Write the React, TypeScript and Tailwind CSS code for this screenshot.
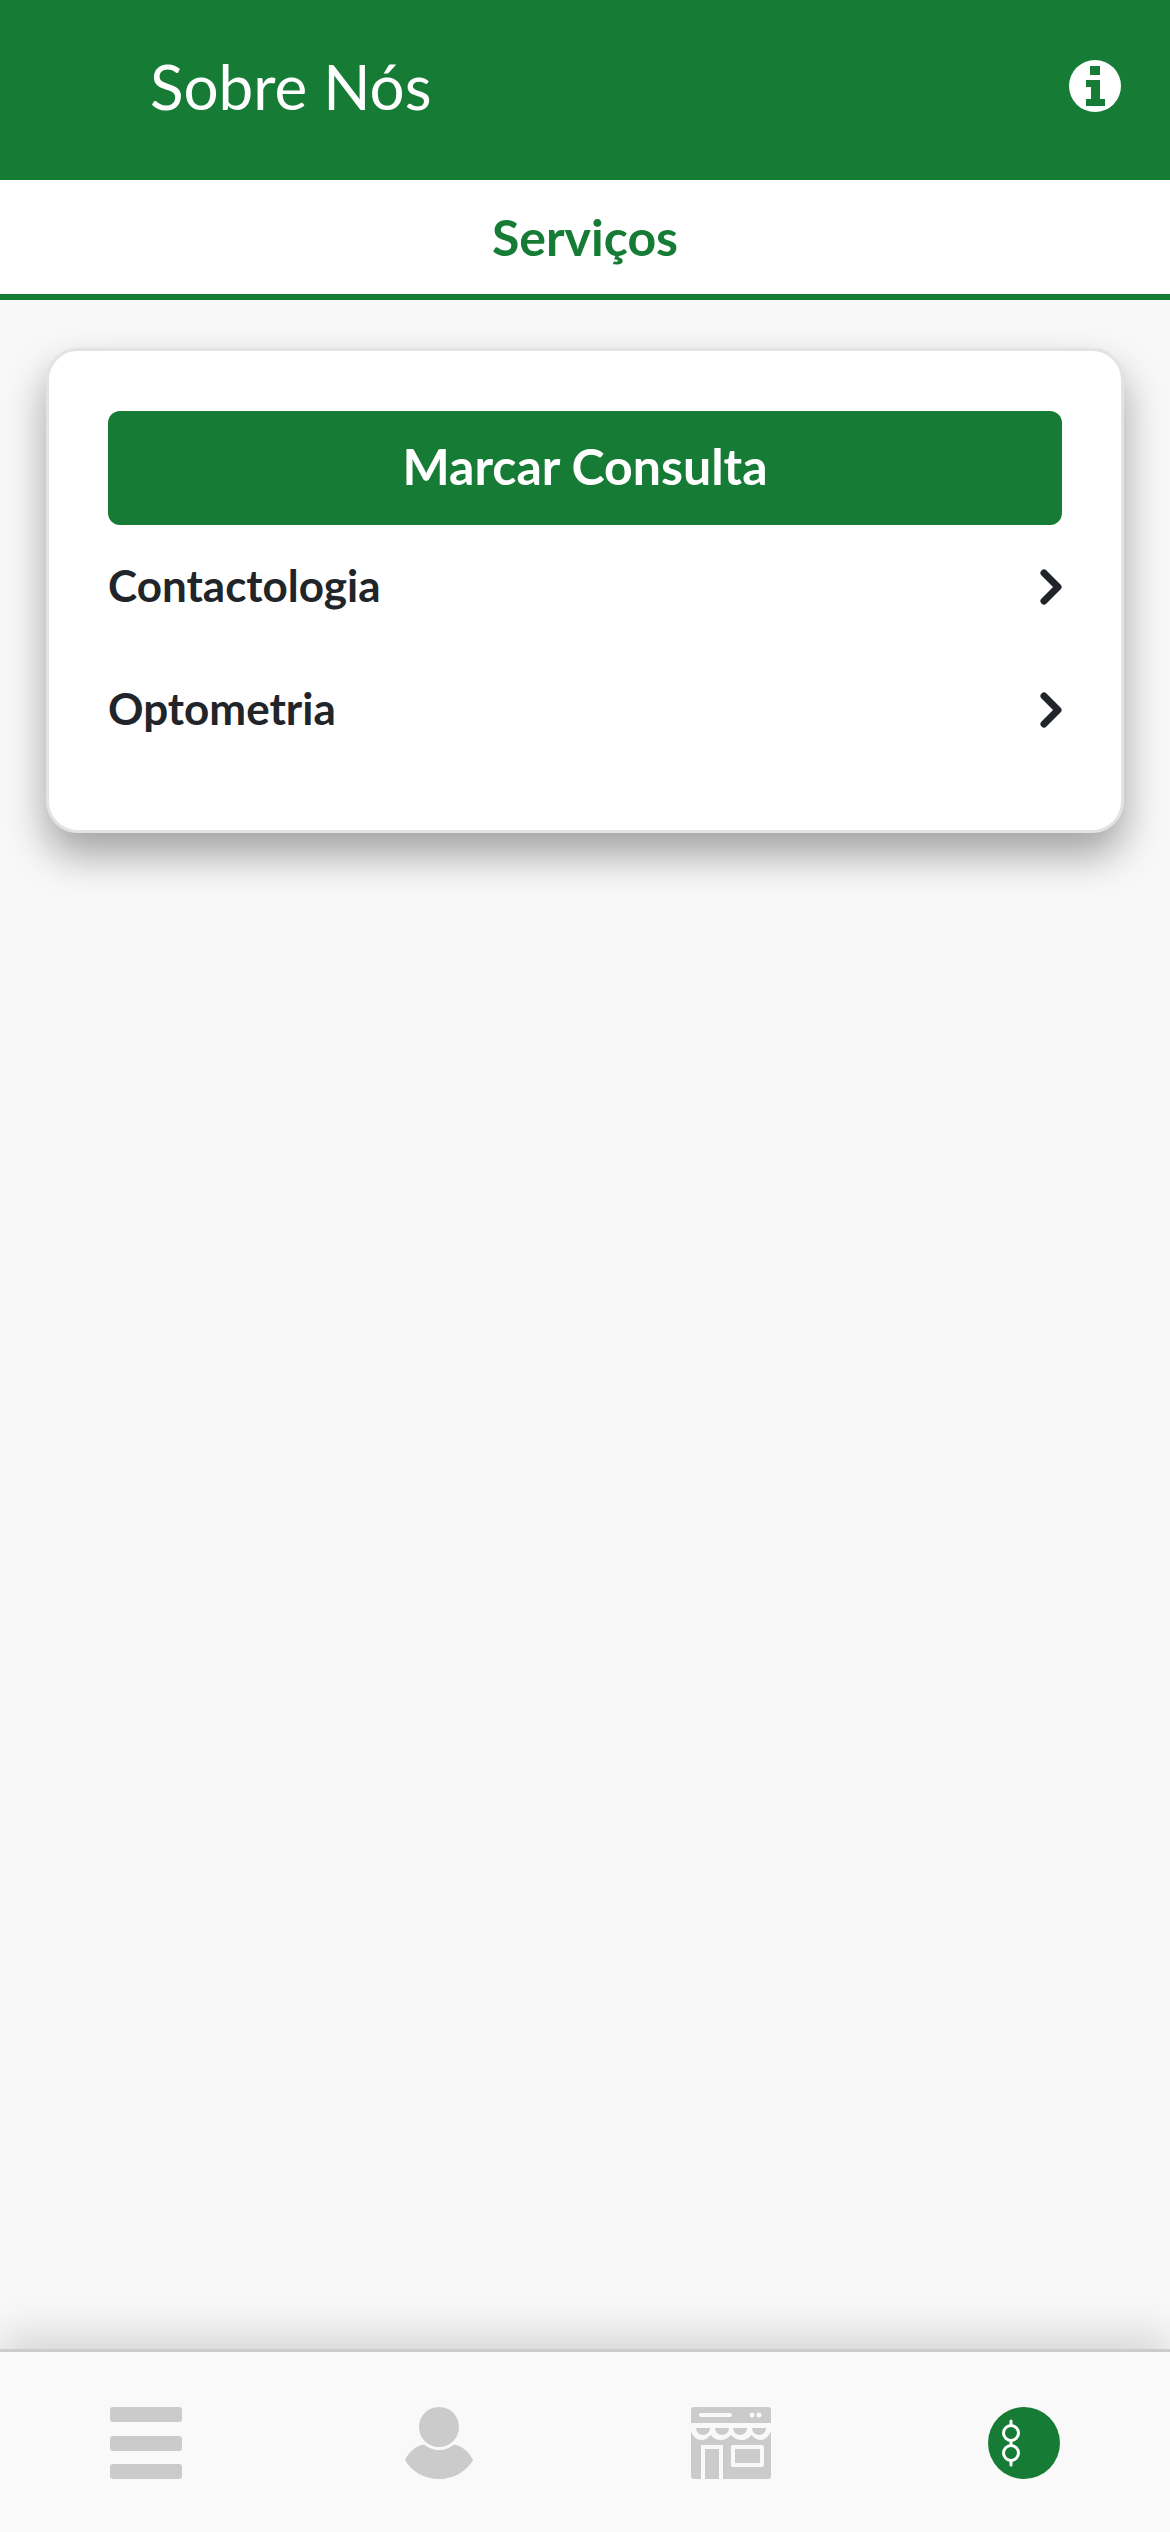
import React from "react";

function InfoIcon() {
  return (
    <svg width="52" height="52" viewBox="0 0 52 52">
      <circle cx="26" cy="26" r="26" fill="#fff" />
      <path d="M21 6h10v9H21zM17 20h14v19h5v7H17v-7h5V27h-5z" fill="#167c35" />
    </svg>
  );
}

function Chevron() {
  return (
    <svg width="22" height="36" viewBox="0 0 22 36" fill="none" className="shrink-0">
      <path d="M4 4l14 14L4 32" stroke="#212529" strokeWidth="7" strokeLinecap="round" strokeLinejoin="round" />
    </svg>
  );
}

function Row({ label }: { label: string }) {
  return (
    <div className="flex h-[123px] items-center justify-between">
      <span className="pb-[3px] text-[44px] font-bold text-[#212529]">{label}</span>
      <Chevron />
    </div>
  );
}

function MenuIcon() {
  return (
    <div className="flex h-[72px] w-[72px] flex-col justify-between">
      <div className="h-[15px] rounded-[3px] bg-[#cbcbcb]" />
      <div className="h-[15px] rounded-[3px] bg-[#cbcbcb]" />
      <div className="h-[15px] rounded-[3px] bg-[#cbcbcb]" />
    </div>
  );
}

function PersonIcon() {
  return (
    <svg width="68" height="72" viewBox="0 0 68 72" fill="#cbcbcb">
      <ellipse cx="34" cy="20" rx="20" ry="20" />
      <path d="M19 37.500c4 3.500 9 5.500 15 5.500s11-2 15-5.500c8 1.500 15 7 19 15.500C62 64 49 72 34 72S6 64 0 53c4-8.500 11-14 19-15.500z" />
    </svg>
  );
}

function StoreIcon() {
  return (
    <svg width="80" height="72" viewBox="0 0 80 72" fill="#cbcbcb">
      <path d="M3 0h74a3 3 0 013 3v13H0V3a3 3 0 013-3z" />
      <rect x="8" y="6" width="33" height="4" rx="2" fill="#f9f9f9" />
      <circle cx="61" cy="8" r="2.500" fill="#f9f9f9" />
      <circle cx="68" cy="8" r="2.500" fill="#f9f9f9" />
      <path d="M5 21h14a7 7 0 01-14 0zM24 21h14a7 7 0 01-14 0zM42 21h14a7 7 0 01-14 0zM61 21h14a7 7 0 01-14 0z" />
      <path d="M0 24c2 6 6 9 10 9s7-2 9.500-5c2.500 3 6 5 10 5s7.500-2 10.500-5c3 3 6.500 5 10.500 5s7.500-2 10-5c2.500 3 6 5 9.500 5s8-3 10-9v45a3 3 0 01-3 3H32V38H10v34H3a3 3 0 01-3-3z" />
      <rect x="14" y="42" width="14" height="30" />
      <rect x="40" y="38" width="33" height="22" rx="2" fill="#f9f9f9" />
      <rect x="44" y="42" width="25" height="14" />
    </svg>
  );
}

function GlassesIcon() {
  return (
    <div className="h-[72px] w-[72px] rounded-full bg-[#167c35]">
      <svg width="72" height="72" viewBox="0 0 72 72" fill="none" stroke="#fff" strokeWidth="3">
        <circle cx="23" cy="26" r="7.500" />
        <circle cx="23" cy="46" r="7.500" />
        <path d="M23 14v4.500M23 33.500v5M23 53.500V58" strokeLinecap="round" />
      </svg>
    </div>
  );
}

export default function App() {
  return (
    <div className="flex h-[2532px] w-[1170px] flex-col overflow-hidden bg-[#f8f8f8] font-['Lato',sans-serif]">
      <header className="flex h-[180px] items-center justify-between bg-[#167c35] pb-[8px] pl-[150px] pr-[49px]">
        <h1 className="text-[62px] font-normal text-white">Sobre Nós</h1>
        <InfoIcon />
      </header>

      <div className="flex h-[120px] items-center justify-center border-b-[6px] border-[#167c35] bg-white">
        <span className="text-[50px] font-bold text-[#167c35]">Serviços</span>
      </div>

      <main className="flex-1 px-[46px] pt-[48px]">
        <div className="h-[485px] rounded-[32px] border-[3px] border-[#e3e3e3] bg-white px-[59px] pt-[60px] shadow-[0_22px_40px_rgba(0,0,0,0.35)]">
          <button className="flex h-[114px] w-full items-center justify-center rounded-[12px] bg-[#167c35] pb-[3px] text-[50px] font-bold text-white">
            Marcar Consulta
          </button>
          <Row label="Contactologia" />
          <Row label="Optometria" />
        </div>
      </main>

      <footer className="grid h-[183px] grid-cols-4 justify-items-center border-t-[3px] border-[#cccccc] bg-[#f9f9f9] pt-[55px] shadow-[0_-14px_40px_rgba(0,0,0,0.14)]">
        <div><MenuIcon /></div>
        <div><PersonIcon /></div>
        <div><StoreIcon /></div>
        <div><GlassesIcon /></div>
      </footer>
    </div>
  );
}
